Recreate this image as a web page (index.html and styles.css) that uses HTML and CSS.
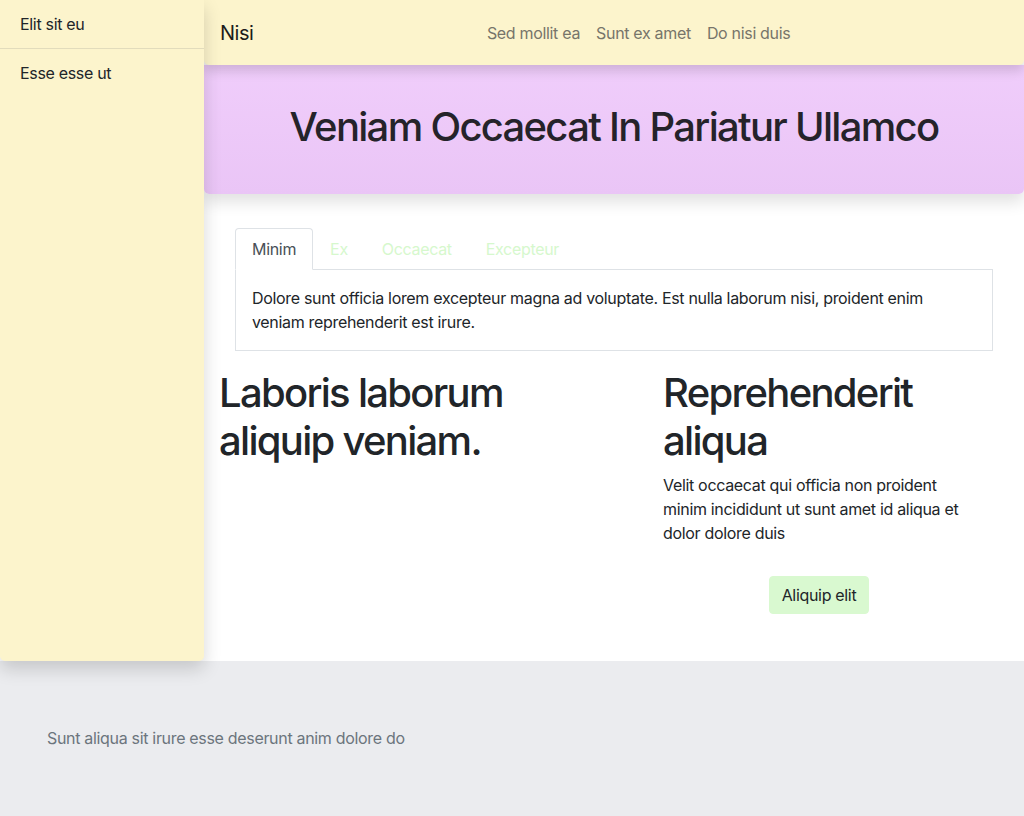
FILE: index.html
```html
<!DOCTYPE html>
<html lang="en">
<head>
<meta charset="utf-8">
<title>Nisi</title>
<link rel="stylesheet" href="styles.css">
</head>
<body>
<div class="layout">
  <aside class="sidebar">
    <a class="side-item side-item--divided" href="#">Elit sit eu</a>
    <a class="side-item" href="#">Esse esse ut</a>
  </aside>
  <div class="main">
    <header class="topbar">
      <a class="brand" href="#">Nisi</a>
      <nav class="topnav">
        <a class="topnav-link" href="#">Sed mollit ea</a>
        <a class="topnav-link" href="#">Sunt ex amet</a>
        <a class="topnav-link" href="#">Do nisi duis</a>
      </nav>
    </header>
    <section class="hero">
      <h1 class="hero-title">Veniam Occaecat In Pariatur Ullamco</h1>
    </section>
    <section class="tabs-area">
      <ul class="tabs">
        <li><a class="tab tab--active" href="#">Minim</a></li>
        <li><a class="tab" href="#">Ex</a></li>
        <li><a class="tab" href="#">Occaecat</a></li>
        <li><a class="tab" href="#">Excepteur</a></li>
      </ul>
      <div class="tab-panel">
        Dolore sunt officia lorem excepteur magna ad voluptate. Est nulla laborum nisi, proident enim veniam reprehenderit est irure.
      </div>
    </section>
    <div class="cols">
      <div class="col col--left">
        <h2 class="col-title">Laboris laborum aliquip veniam.</h2>
      </div>
      <div class="col col--right">
        <h2 class="col-title">Reprehenderit aliqua</h2>
        <p class="col-text">Velit occaecat qui officia non proident minim incididunt ut sunt amet id aliqua et dolor dolore duis</p>
        <div class="btn-row"><button class="btn" type="button">Aliquip elit</button></div>
      </div>
    </div>
  </div>
</div>
<footer class="footer">
  <p class="footer-text">Sunt aliqua sit irure esse deserunt anim dolore do</p>
</footer>
</body>
</html>
```
FILE: styles.css
```css
* { box-sizing: border-box; }
html, body { margin: 0; padding: 0; }
body {
  font-family: Inter, "Noto Sans", "Liberation Sans", sans-serif;
  font-size: 16px;
  line-height: 24px;
  letter-spacing: -0.32px;
  color: #212529;
  background: #ffffff;
}
a { text-decoration: none; }

.layout {
  display: flex;
  align-items: stretch;
  position: relative;
  z-index: 2;
}

.sidebar {
  width: 204px;
  flex: none;
  background: #fcf4cc;
  border-radius: 0 0 5px 5px;
  box-shadow: 0 8px 18px rgba(0, 0, 0, 0.16);
  position: relative;
  z-index: 4;
  display: flex;
  flex-direction: column;
}
.side-item {
  display: block;
  padding: 12px 20px;
  color: #212529;
  line-height: 24px;
}
.side-item--divided { border-bottom: 1px solid #e2dcbc; }

.main {
  flex: 1;
  min-width: 0;
  padding-bottom: 47px;
}

.topbar {
  height: 65px;
  display: flex;
  align-items: center;
  padding: 0 16px;
  background: #fcf4cc;
  border-radius: 0 0 5px 5px;
  box-shadow: 0 6px 12px rgba(0, 0, 0, 0.14);
  position: relative;
  z-index: 3;
}
.brand {
  font-size: 20px;
  line-height: 30px;
  letter-spacing: -0.5px;
  color: #1c1c1a;
  margin-right: 16px;
}
.topnav {
  flex: 1;
  display: flex;
  justify-content: center;
}
.topnav-link {
  padding: 8px;
  color: #77756a;
}

.hero {
  background: linear-gradient(#f0cdfb, #eac5f6);
  border-radius: 0 0 5px 5px;
  box-shadow: 0 8px 16px rgba(0, 0, 0, 0.12);
  padding: 38px 16px 43px;
  position: relative;
  z-index: 2;
}
.hero-title {
  margin: 0;
  text-align: center;
  font-size: 40px;
  line-height: 48px;
  font-weight: 500;
  color: #25232a;
  letter-spacing: -1.7px;
}

.tabs-area {
  padding: 34px 31px 0;
}
.tabs {
  list-style: none;
  margin: 0;
  padding: 0;
  display: flex;
  border-bottom: 1px solid #dee2e6;
}
.tabs li { margin-bottom: -1px; }
.tab {
  display: block;
  padding: 8px 16px;
  border: 1px solid transparent;
  border-radius: 4px 4px 0 0;
  color: #d6f8cd;
}
.tab--active {
  color: #495057;
  background: #fff;
  border-color: #dee2e6 #dee2e6 #fff;
}
.tab-panel {
  border: 1px solid #dee2e6;
  border-top: none;
  padding: 16px;
}

.cols {
  display: grid;
  grid-template-columns: 400px 312px;
  column-gap: 44px;
  padding: 18px 15px 0;
}
.col-title {
  margin: 0 0 8px;
  font-size: 40px;
  line-height: 48px;
  font-weight: 500;
  color: #212529;
  letter-spacing: -1.7px;
}
.col-text {
  margin: 0 0 16px;
}
.btn-row {
  display: flex;
  justify-content: center;
  padding-top: 15px;
}
.btn {
  font: inherit;
  letter-spacing: -0.32px;
  color: #212529;
  background: #d9f9d0;
  border: 1px solid #d9f9d0;
  border-radius: 4px;
  padding: 6px 12px;
  line-height: 24px;
  cursor: pointer;
}

.footer {
  background: #ebecef;
  height: 155px;
  padding: 65px 47px 0;
  position: relative;
  z-index: 1;
}
.footer-text {
  margin: 0;
  color: #6c757d;
}
```
